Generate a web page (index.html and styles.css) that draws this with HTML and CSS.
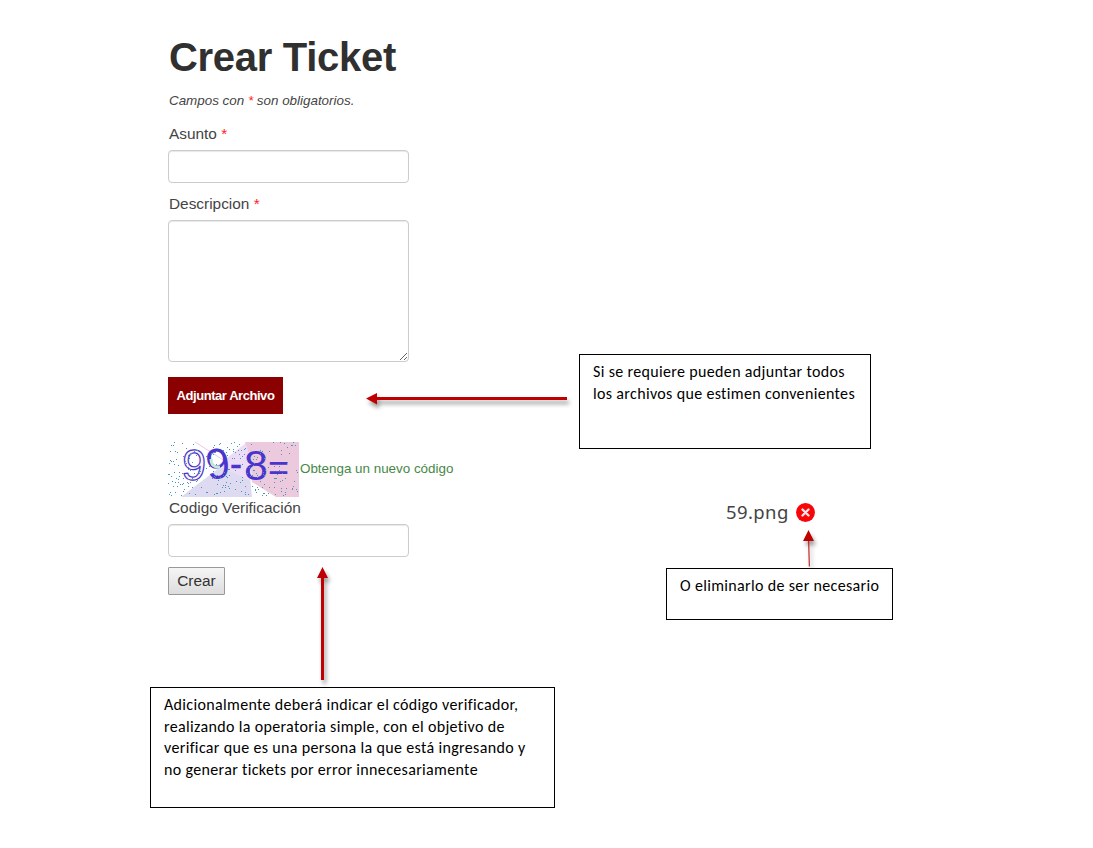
FILE: index.html
```html
<!DOCTYPE html>
<html lang="es">
<head>
<meta charset="utf-8">
<title>Crear Ticket</title>
<link rel="stylesheet" href="styles.css">
</head>
<body>
<main class="page">
  <form class="ticket-form">
    <h1 class="title">Crear Ticket</h1>
    <p class="note">Campos con <span class="required">*</span> son obligatorios.</p>
    <label class="label" for="asunto">Asunto <span class="required">*</span></label>
    <input class="field" id="asunto" type="text">
    <label class="label label-desc" for="desc">Descripcion <span class="required">*</span></label>
    <textarea class="field area" id="desc"></textarea>
    <button class="attach" type="button">Adjuntar Archivo</button>
    <div class="captcha-row">
      <svg class="captcha" width="131" height="55" viewBox="0 0 131 55">
        <path fill="#dedaf2" d="M13 55 60 19 80 14 84 55Z"/>
        <path fill="#ecdcf5" d="M79 0 49 24 82 38 84 0Z"/>
        <path fill="#edc9dd" d="M77 0H131V55H108L84 40 82 14Z"/>
        <path fill="none" stroke="#eacbe6" d="M27 0 60 21"/>
        <g class="captcha-text">
          <text class="digit-outline" transform="translate(13 37) rotate(4)">9</text>
          <text transform="translate(40 38) rotate(-8)">9</text>
          <text class="operator" x="62" y="34">-</text>
          <text x="76" y="38">8</text>
          <text class="thin" x="100" y="38">=</text>
        </g>
        <path fill="none" stroke="#c5e8d0" stroke-width="3" d="M43 17Q43 26 52 25"/>
        <path class="speckles" id="speckles"/>
      </svg>
      <a class="refresh">Obtenga un nuevo código</a>
    </div>
    <label class="label label-code" for="codigo">Codigo Verificación</label>
    <input class="field" id="codigo" type="text">
    <button class="submit" type="button">Crear</button>
  </form>

  <div class="file"><span class="file-name">59.png</span>
    <svg width="20" height="20" viewBox="0 0 20 20"><circle cx="9.500" cy="9.500" r="9.400" fill="#f80509"/><path d="m6.500 6.500 6 6m0-6-6 6" stroke="#ffe4e4" stroke-width="2.400" stroke-linecap="round"/></svg>
  </div>

  <svg class="arrows" width="1093" height="848" viewBox="0 0 1093 848">
    <g fill="#c00000">
      <path d="M366 398.500 377 393V397H567V400H377V404.500Z"/>
      <path d="M322.500 567 328 578H324V680H321V578H317Z"/>
      <path d="M808.500 530 814 541H809.200L809.800 566.500H808.800L808.200 541H803Z"/>
    </g>
  </svg>

  <section class="callout callout-attach"><span class="line">Si se requiere pueden adjuntar todos</span><span class="line">los archivos que estimen convenientes</span></section>
  <section class="callout callout-delete"><span class="line">O eliminarlo de ser necesario</span></section>
  <section class="callout callout-code"><span class="line">Adicionalmente deberá indicar el código verificador,</span><span class="line">realizando la operatoria simple, con el objetivo de</span><span class="line">verificar que es una persona la que está ingresando y</span><span class="line">no generar tickets por error innecesariamente</span></section>
</main>
<script src="captcha.js"></script>
</body>
</html>
```
FILE: styles.css
```css
* { box-sizing: border-box; }
body { margin: 0; background: #fff; }
.page { position: relative; width: 1093px; height: 848px; overflow: hidden; font-family: "Liberation Sans", Arial, sans-serif; color: #444; }
.ticket-form { display: flex; flex-direction: column; align-items: flex-start; padding: 34px 0 0 168px; width: 520px; }
.title { margin: 0; padding-left: 1px; font-size: 40px; letter-spacing: -.3px; line-height: 46px; font-weight: bold; color: #303030; white-space: nowrap; }
.note { margin: 12px 0 0 1px; font-size: 13.4px; letter-spacing: 0; line-height: 18px; font-style: italic; }
.required { color: #f22; }
.label { margin-top: 14px; padding-left: 1px; font-size: 15.4px; line-height: 20px; }
.field { width: 241px; height: 33px; margin: 6px 0 0; padding: 4px 6px; border: 1px solid #ccc; border-radius: 4px; background: #fff; box-shadow: inset 0 1px 1px #e8e8e8; }
.label-desc { margin-top: 11px; }
.area { height: 142px; resize: both; }
.attach { width: 115px; height: 37px; margin: 15px 0 0; padding: 0; border: 0; background: #8b0000; color: #fff; font: bold 13px "Liberation Sans", Arial, sans-serif; letter-spacing: -.45px; }
.captcha-row { display: flex; align-items: center; height: 55px; margin-top: 28px; }
.captcha { overflow: visible; }
.captcha-text { font: 43px "Liberation Sans", Arial, sans-serif; fill: #4935ce; }
.captcha-text .digit-outline { fill: #faf4f4; stroke: #4935ce; stroke-width: 1.2px; }
.captcha-text .operator { font-size: 36px; stroke: #4935ce; stroke-width: .5px; }
.captcha-text .thin { font-size: 36px; }
.speckles { fill: #4697b8; }
.refresh { margin: -3px 0 0 1px; font-size: 13.4px; color: #468847; white-space: nowrap; }
.label-code { margin-top: 1px; }
.submit { width: 57px; height: 28px; margin: 10px 0 0; padding: 0 0 1px; border: 1px solid #999; border-radius: 1px; background: linear-gradient(#f5f5f5, #ddd); color: #333; font: 15.4px "Liberation Sans", Arial, sans-serif; }
.file { position: absolute; left: 726px; top: 503px; display: flex; align-items: center; gap: 7px; color: #444; }
.file-name { margin-top: -2px; font: 18.5px/20px "Noto Sans", sans-serif; letter-spacing: .4px; }
.arrows { position: absolute; inset: 0; pointer-events: none; filter: drop-shadow(2px 4px 2px #0006); }
.callout { position: absolute; border: 1px solid #000; background: #fff; padding: 6px 13px; color: #000; font: 16px/21.7px Carlito, Calibri, Lato, sans-serif; letter-spacing: .34px; }
.line { display: block; width: max-content; white-space: nowrap; }
.callout-attach { left: 579px; top: 354px; width: 292px; height: 95px; }
.callout-delete { left: 666px; top: 568px; width: 227px; height: 52px; }
.callout-code { left: 150px; top: 687px; width: 405px; height: 121px; }
```
FILE: captcha.js
```javascript
// Deterministic noise over the verification image.
let seed = 73;
const next = () => (seed = (seed * 16807) % 2147483647) / 2147483647;
let dots = "";
for (let i = 0; i < 240; i++) {
  const x = Math.floor(next() * 130);
  const y = Math.floor(next() * 54);
  dots += `M${x} ${y}h1v1h-1z`;
}
document.getElementById("speckles").setAttribute("d", dots);
```
